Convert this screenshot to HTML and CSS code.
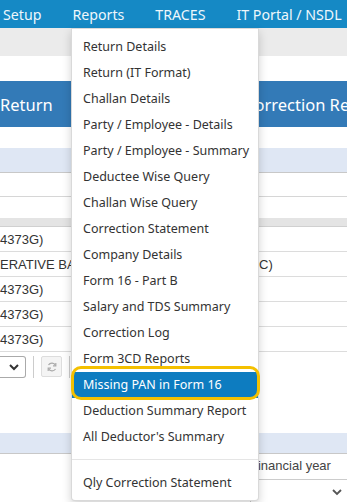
FILE: index.html
```html
<!DOCTYPE html>
<html lang="en">
<head>
    <meta charset="UTF-8">
    <title>Reports Menu</title>
    <link rel="stylesheet" href="styles.css">
</head>
<body>

    <div class="topnav">
        <span>Setup</span>
        <span>Reports</span>
        <span>TRACES</span>
        <span>IT Portal / NSDL</span>
    </div>

    <div class="band-grey"></div>
    <div class="band-white"></div>

    <div class="title-band">
        <div class="title-left">Return</div>
        <div class="title-right">Correction Return</div>
    </div>

    <div class="gap-white"></div>
    <div class="row-blue"></div>
    <div class="row-plain"></div>
    <div class="row-plain no-line"></div>
    <div class="row-grey"></div>

    <div class="data-rows">
        <div class="data-row"><span class="cell-left">4373G)</span><span class="cell-right"></span></div>
        <div class="data-row"><span class="cell-left">ERATIVE BANK LTD</span><span class="cell-right">C)</span></div>
        <div class="data-row"><span class="cell-left">4373G)</span><span class="cell-right"></span></div>
        <div class="data-row"><span class="cell-left">4373G)</span><span class="cell-right"></span></div>
        <div class="data-row"><span class="cell-left">4373G)</span><span class="cell-right"></span></div>
    </div>

    <div class="toolbar">
        <div class="pager-select">
            <svg width="12" height="12" viewBox="0 0 12 12"><path d="M2 4 L6 8 L10 4" fill="none" stroke="#333" stroke-width="2"/></svg>
        </div>
        <div class="tool-sep"></div>
        <div class="refresh-btn">
            <svg width="12" height="12" viewBox="0 0 12 12"><path d="M9.5 4.5 A4 4 0 0 0 2.5 4 M2.5 7.5 A4 4 0 0 0 9.5 8" fill="none" stroke="#aaa" stroke-width="1.2"/><path d="M9.8 2 L9.8 4.8 L7 4.8" fill="none" stroke="#aaa" stroke-width="1.2"/><path d="M2.2 10 L2.2 7.2 L5 7.2" fill="none" stroke="#aaa" stroke-width="1.2"/></svg>
        </div>
        <div class="tool-sep"></div>
    </div>

    <div class="spacer"></div>
    <div class="row-blue lower"></div>

    <div class="fy-block">
        <div class="fy-label">Financial year</div>
        <div class="fy-select">
            <svg width="12" height="12" viewBox="0 0 12 12"><path d="M2 4 L6 8 L10 4" fill="none" stroke="#555" stroke-width="1.8"/></svg>
        </div>
    </div>

    <ul class="dropdown">
        <li>Return Details</li>
        <li>Return (IT Format)</li>
        <li>Challan Details</li>
        <li>Party / Employee - Details</li>
        <li>Party / Employee - Summary</li>
        <li>Deductee Wise Query</li>
        <li>Challan Wise Query</li>
        <li>Correction Statement</li>
        <li>Company Details</li>
        <li>Form 16 - Part B</li>
        <li>Salary and TDS Summary</li>
        <li>Correction Log</li>
        <li>Form 3CD Reports</li>
        <li class="active">Missing PAN in Form 16</li>
        <li>Deduction Summary Report</li>
        <li>All Deductor's Summary</li>
        <li class="divider"></li>
        <li>Qly Correction Statement</li>
    </ul>

</body>
</html>
```

FILE: styles.css
```css
body {
    margin: 0;
    width: 347px;
    height: 502px;
    overflow: hidden;
    position: relative;
    background: #fff;
    font-family: "Noto Sans", sans-serif;
    color: #333;
}
.topnav {
    height: 28px;
    background-color: #1589c5;
    display: flex;
    align-items: center;
    gap: 31px;
    padding-left: 3px;
    color: #eef7fc;
    font-size: 14.2px;
    white-space: nowrap;
}
.band-grey {
    height: 28px;
    background-color: #ebebeb;
}
.band-white {
    height: 25px;
}
.title-band {
    height: 46px;
    background-color: #337ab7;
    display: flex;
    align-items: center;
    color: #fff;
    font-size: 16.5px;
    white-space: nowrap;
    overflow: hidden;
}
.title-left {
    width: 244px;
    flex-shrink: 0;
}
.title-right {
    flex-shrink: 0;
}
.gap-white {
    height: 21px;
}
.row-blue {
    height: 24px;
    background-color: #dfe7f4;
    border-bottom: 1px solid #c8c8c8;
}
.row-plain {
    height: 23px;
    border-bottom: 1px solid #d6d6d6;
}
.row-plain.no-line {
    height: 21px;
    border-bottom: none;
}
.row-grey {
    height: 8px;
    background-color: #e4e4e4;
    border-bottom: 1px solid #d0d0d0;
}
.data-row {
    height: 24px;
    border-bottom: 1px solid #dcdcdc;
    display: flex;
    align-items: center;
    font-family: "Liberation Sans", Arial, sans-serif;
    font-size: 13px;
    white-space: nowrap;
}
.cell-left {
    width: 71px;
    margin-right: 188px;
    overflow: hidden;
}
.toolbar {
    height: 29px;
    display: flex;
    align-items: center;
    gap: 7px;
}
.pager-select {
    width: 28px;
    height: 22px;
    margin-left: -2px;
    border: 1px solid #aaa;
    border-left: none;
    border-radius: 0 3px 3px 0;
    display: flex;
    align-items: center;
    justify-content: flex-end;
    padding-right: 5px;
    box-sizing: border-box;
}
.tool-sep {
    width: 1px;
    height: 22px;
    background-color: #ccc;
}
.refresh-btn {
    width: 19px;
    height: 19px;
    border: 1px solid #ddd;
    border-radius: 2px;
    background-color: #f4f4f4;
    display: flex;
    align-items: center;
    justify-content: center;
}
.spacer {
    height: 52px;
}
.row-blue.lower {
    height: 20px;
}
.fy-block {
    padding-left: 250px;
    padding-top: 4px;
}
.fy-label {
    font-family: "Liberation Sans", Arial, sans-serif;
    font-size: 13px;
    color: #444;
    height: 15px;
}
.fy-select {
    margin-top: 6px;
    width: 100px;
    height: 26px;
    border: 1px solid #ccc;
    border-radius: 3px;
    display: flex;
    justify-content: flex-end;
    align-items: center;
    padding-right: 6px;
    box-sizing: border-box;
}
.dropdown {
    position: absolute;
    left: 71px;
    top: 28px;
    width: 188px;
    margin: 0;
    padding: 5px 0 4px;
    list-style: none;
    background-color: #fff;
    border: 1px solid rgba(0, 0, 0, 0.15);
    border-radius: 0 0 4px 4px;
    box-shadow: 0 4px 10px rgba(0, 0, 0, 0.18);
    box-sizing: border-box;
    font-size: 12.5px;
    color: #333;
}
.dropdown li {
    height: 26px;
    line-height: 26px;
    padding-left: 11px;
    white-space: nowrap;
}
.dropdown li.active {
    position: relative;
    background-color: #0d7cc0;
    color: #fff;
}
.dropdown li.active::after {
    content: "";
    position: absolute;
    left: -1px;
    right: -2px;
    top: -6px;
    bottom: -2px;
    border: 3px solid #f4c000;
    border-radius: 10px;
}
.dropdown li.divider {
    height: 1px;
    margin: 9px 0 10px;
    background-color: #e5e5e5;
}
```
